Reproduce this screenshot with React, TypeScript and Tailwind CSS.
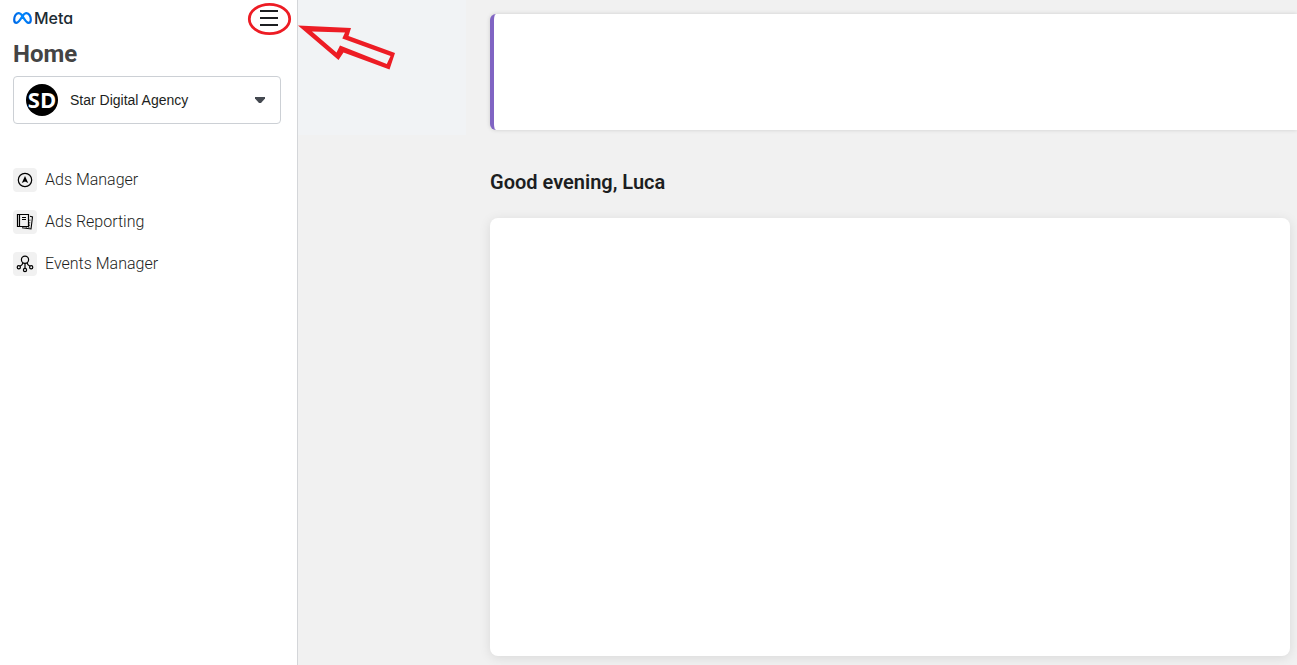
import type { ReactNode } from "react";

function MetaMark() {
  return (
    <svg viewBox="0 0 19 12" className="h-3 w-[19px]" fill="none" aria-hidden="true">
      <defs>
        <linearGradient id="metaBlue" x1="0" y1="0" x2="1" y2="0">
          <stop offset="0" stopColor="#0068e5" />
          <stop offset="0.5" stopColor="#0088ff" />
          <stop offset="1" stopColor="#006be8" />
        </linearGradient>
      </defs>
      <path
        d="M9.5 4.1C8.3 2 7 1.100 5.4 1.100C2.9 1.100 1.2 4.600 1.2 7.700C1.2 9.700 2 10.900 3.500 10.900C5.200 10.900 6.300 9.400 9.500 4.100C10.900 1.900 12.100 1.100 13.500 1.100C16 1.100 17.800 4.400 17.800 7.800C17.800 9.800 17 10.900 15.500 10.900C13.800 10.900 12.700 9.600 9.500 4.100Z"
        stroke="url(#metaBlue)"
        strokeWidth="2.2"
      />
    </svg>
  );
}

function AdsManagerIcon() {
  return (
    <svg viewBox="0 0 24 24" className="size-6" fill="none" aria-hidden="true">
      <circle cx="12" cy="12" r="6.7" stroke="#000" strokeWidth="1.2" />
      <path d="M12 8L15.200 15L12 13.600L8.800 15Z" fill="#000" />
    </svg>
  );
}

function AdsReportingIcon() {
  return (
    <svg viewBox="0 0 24 24" className="size-6" fill="none" stroke="#000" aria-hidden="true">
      <path d="M4.500 4.500H15.500V16.500H4.500Z M6.500 4.500V16.500" strokeWidth="1.2" />
      <path d="M9 7.500H13M9 9.500H13" strokeWidth="1" />
      <path d="M17 6.300L19.500 7L18 19L9 17.800" strokeWidth="1.1" />
      <path d="M17 9.500L16.300 17.300H12" strokeWidth="0.7" strokeDasharray="1.5 1" />
    </svg>
  );
}

function EventsManagerIcon() {
  return (
    <svg viewBox="0 0 24 24" className="size-6" fill="none" stroke="#000" strokeWidth="1.2" aria-hidden="true">
      <circle cx="12" cy="7.800" r="3.600" />
      <circle cx="5.800" cy="15.300" r="1.600" />
      <circle cx="12" cy="18" r="1.600" />
      <circle cx="18.200" cy="15.300" r="1.600" />
      <path d="M12 11.400V16.400M9.900 10.800C9.500 12.700 8.500 13.400 7.100 14.300M14.100 10.800C14.500 12.700 15.500 13.400 16.900 14.300" />
    </svg>
  );
}

function NavItem({ icon, label }: { icon: ReactNode; label: string }) {
  return (
    <li>
      <a href="#" className="flex h-6 items-center gap-2 text-base font-[350] text-[#1c1e21]">
        <span className="size-6 rounded bg-[#f1f1f1]">{icon}</span>
        {label}
      </a>
    </li>
  );
}

function MenuHighlight() {
  return (
    <svg
      viewBox="0 0 219 135"
      className="pointer-events-none absolute left-[247px] top-0 h-[135px] w-[219px]"
      fill="none"
      aria-hidden="true"
    >
      <rect x="51" width="168" height="135" fill="#f1f3f5" />
      <ellipse cx="22.5" cy="19" rx="20.2" ry="14.7" stroke="#ed1c24" strokeWidth="2.8" />
      <path
        fillRule="evenodd"
        fill="#ed1c24"
        d="M51 25.500L104 28L101.500 36L148 53L142.500 69.500L96.500 52.500L91.500 60Z M65 31.500L98 32.500L95.300 38.500L143.500 56L139.800 64L93 45.500L89.500 52.500Z"
      />
    </svg>
  );
}

export default function App() {
  return (
    <div className="relative flex min-h-screen overflow-x-hidden bg-[#f1f1f1] font-['Roboto',sans-serif]">
      <aside className="w-[298px] shrink-0 border-r border-[#d4d6d9] bg-white pr-4 pl-[13px]">
        <div className="flex h-9 items-center justify-between">
          <a
            href="#"
            className="flex items-center gap-[2px] font-['Inter',sans-serif] text-base font-medium text-[#1c2b33] [font-feature-settings:'cv11']"
          >
            <MetaMark />
            Meta
          </a>
          <button type="button" aria-label="Toggle menu" className="flex size-6 items-center justify-center">
            <svg viewBox="0 0 18 16" className="h-4 w-[18px]" aria-hidden="true">
              <path d="M0 1H18M0 8H18M0 15H18" stroke="#1c1e21" strokeWidth="2" />
            </svg>
          </button>
        </div>
        <h1 className="text-2xl leading-9 font-bold text-[#444]">Home</h1>
        <button
          type="button"
          className="mt-1 flex h-12 w-full items-center rounded border border-[#ccd0d5] pr-[14px] pl-3 font-['Liberation_Sans',sans-serif] text-sm text-[#1c1e21]"
        >
          <span className="flex size-8 items-center justify-center overflow-hidden rounded-full bg-black font-['Open_Sans',sans-serif] text-[22px] font-bold text-white">
            SD
          </span>
          <span className="ml-3">Star Digital Agency</span>
          <svg viewBox="0 0 12 6" className="ml-auto h-[6px] w-3" aria-hidden="true">
            <path d="M1 0H11V1.500L7 6H5L1 1.500Z" fill="#444950" />
          </svg>
        </button>
        <nav className="mt-11">
          <ul className="flex flex-col gap-[18px]">
            <NavItem icon={<AdsManagerIcon />} label="Ads Manager" />
            <NavItem icon={<AdsReportingIcon />} label="Ads Reporting" />
            <NavItem icon={<EventsManagerIcon />} label="Events Manager" />
          </ul>
        </nav>
      </aside>
      <main className="flex min-w-0 flex-1 flex-col pt-[14px] pb-[9px] pl-48">
        <section className="h-29 shrink-0 rounded-l-md border-l-4 border-[#8064c3] bg-white shadow-[0_0_4px_rgba(0,0,0,0.15)]" />
        <h2 className="mt-9 text-xl leading-8 font-semibold text-[#1c1e21]">Good evening, Luca</h2>
        <section className="mt-5 mr-[7px] flex-1 rounded-lg bg-white shadow-[0_2px_12px_rgba(0,0,0,0.1)]" />
      </main>
      <MenuHighlight />
    </div>
  );
}
